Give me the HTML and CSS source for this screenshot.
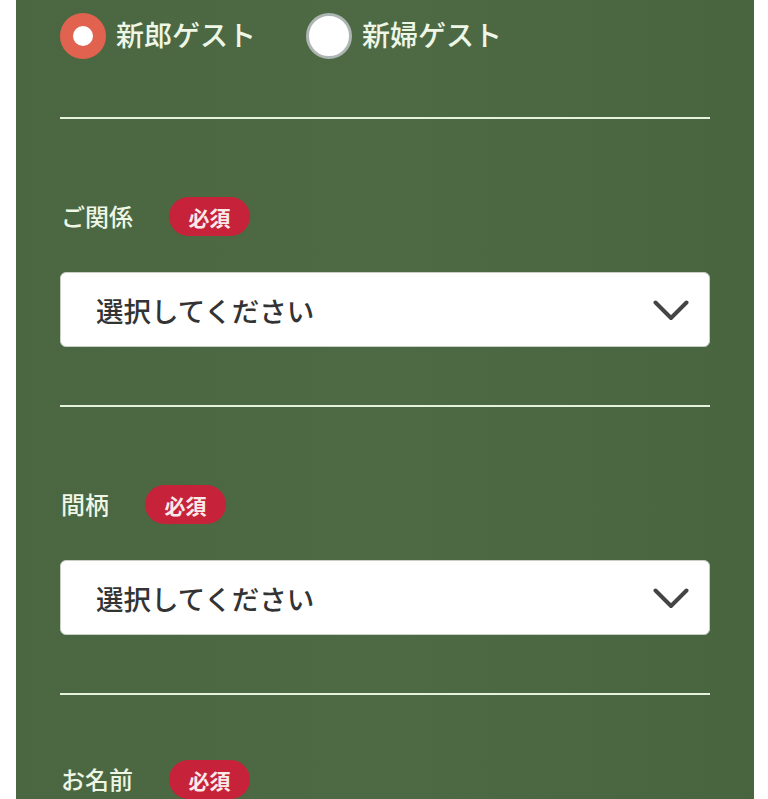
FILE: index.html
```html
<!DOCTYPE html>
<html lang="ja">
<head>
<meta charset="utf-8">
<title>ゲスト情報</title>
<link rel="stylesheet" href="styles.css">
</head>
<body>
<div class="panel">
  <div class="radios">
    <label class="radio-item">
      <span class="radio radio--checked"></span>
      <span class="radio-text">新郎ゲスト</span>
    </label>
    <label class="radio-item">
      <span class="radio"></span>
      <span class="radio-text">新婦ゲスト</span>
    </label>
  </div>
  <div class="divider"></div>

  <div class="field">
    <div class="field-head">
      <span class="field-label">ご関係</span>
      <span class="badge">必須</span>
    </div>
    <div class="select">
      <span class="select-text">選択してください</span>
      <svg class="chevron" width="36" height="22" viewBox="0 0 36 22"><polyline points="2.5,2.5 18,18 33.5,2.5" fill="none" stroke="#454545" stroke-width="4" stroke-linecap="round" stroke-linejoin="round"/></svg>
    </div>
  </div>
  <div class="divider"></div>

  <div class="field">
    <div class="field-head">
      <span class="field-label">間柄</span>
      <span class="badge">必須</span>
    </div>
    <div class="select">
      <span class="select-text">選択してください</span>
      <svg class="chevron" width="36" height="22" viewBox="0 0 36 22"><polyline points="2.5,2.5 18,18 33.5,2.5" fill="none" stroke="#454545" stroke-width="4" stroke-linecap="round" stroke-linejoin="round"/></svg>
    </div>
  </div>
  <div class="divider"></div>

  <div class="field field--last">
    <div class="field-head">
      <span class="field-label">お名前</span>
      <span class="badge">必須</span>
    </div>
    <div class="select">
      <span class="select-text"></span>
    </div>
  </div>
</div>
</body>
</html>
```
FILE: styles.css
```css
html, body {
  margin: 0;
  padding: 0;
  background: #ffffff;
}
body {
  font-family: "Noto Sans CJK JP", "Noto Sans", sans-serif;
}
.panel {
  margin-left: 16px;
  width: 738px;
  box-sizing: border-box;
  min-height: 900px;
  padding: 13px 44px 40px;
  background: linear-gradient(90deg, #4a6741 0%, #4d6a45 50%, #48653f 100%);
}
.radios {
  display: flex;
  align-items: center;
  height: 46px;
  gap: 50px;
}
.radio-item {
  display: flex;
  align-items: center;
  gap: 10px;
}
.radio {
  width: 46px;
  height: 46px;
  box-sizing: border-box;
  border-radius: 50%;
  background: #ffffff;
  border: 3px solid #aeb6b4;
  flex: none;
}
.radio--checked {
  border: 13px solid #e1634f;
}
.radio-text {
  font-size: 28px;
  font-weight: 500;
  line-height: 46px;
  padding-bottom: 4px;
  color: #eef6e6;
}
.divider {
  height: 2px;
  background: #e6f3dc;
  margin-top: 58px;
}
.field {
  padding-top: 78px;
}
.field--last {
  padding-top: 65px;
}
.field-head {
  display: flex;
  align-items: center;
  height: 39px;
  gap: 36px;
}
.field-label {
  font-size: 24px;
  font-weight: 500;
  color: #eef6e6;
  line-height: 39px;
  padding-left: 1px;
  padding-bottom: 2px;
}
.badge {
  display: inline-flex;
  align-items: center;
  justify-content: center;
  width: 81px;
  height: 39px;
  border-radius: 20px;
  background: #c6233a;
  color: #fbe9ea;
  font-size: 21px;
  font-weight: 700;
}
.select {
  margin-top: 36px;
  height: 75px;
  box-sizing: border-box;
  background: #ffffff;
  border: 1px solid #c9cfc6;
  border-radius: 6px;
  display: flex;
  align-items: center;
  justify-content: space-between;
  padding: 0 20px 0 35px;
}
.select-text {
  font-size: 27.5px;
  font-weight: 500;
  color: #333333;
}
.chevron {
  display: block;
  margin-top: 2px;
}
```
